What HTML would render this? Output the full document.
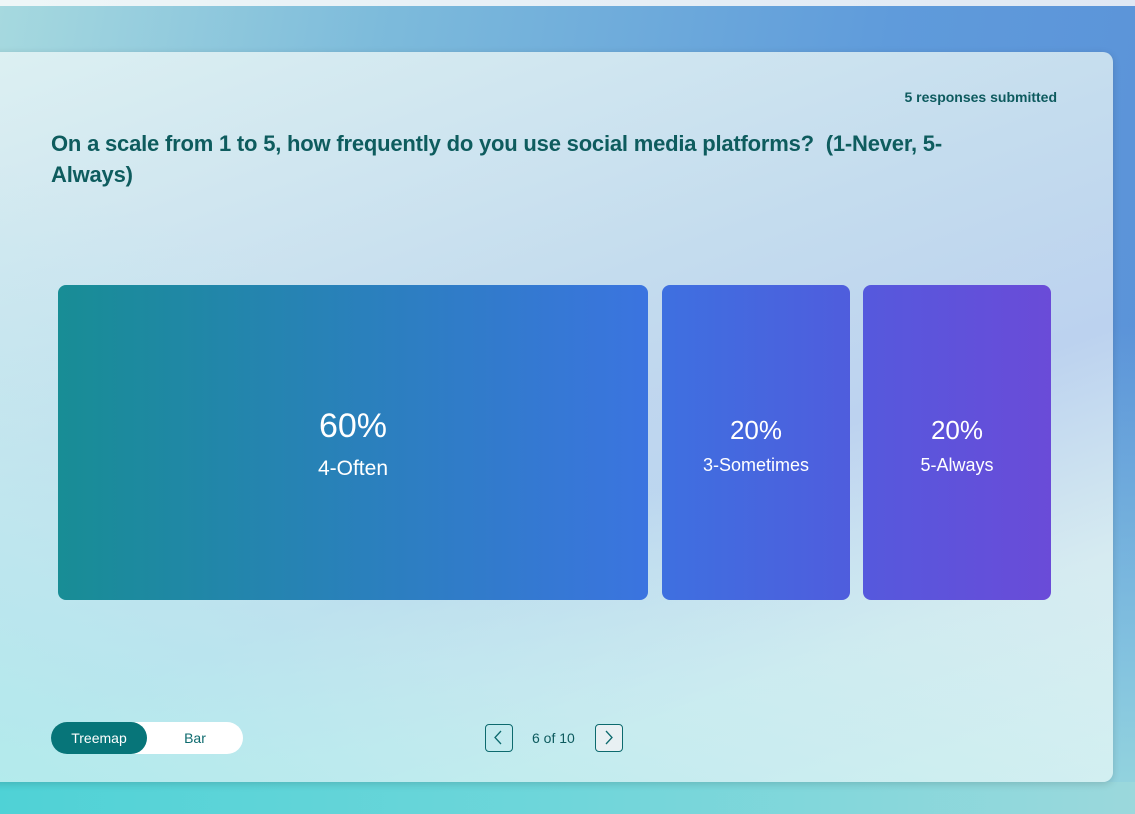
<!DOCTYPE html>
<html><head><meta charset="utf-8"><style>
*{margin:0;padding:0;box-sizing:border-box}
html,body{width:1135px;height:814px;overflow:hidden}
body{font-family:"Liberation Sans",sans-serif;position:relative;
background:linear-gradient(180deg,rgba(0,0,0,0) 0%,rgba(0,0,0,0) 40%,rgba(140,205,225,.8) 80%,rgba(150,215,222,1) 100%),linear-gradient(100deg,#a6d9df 0%,#7dbbdb 30%,#5f9bdb 70%,#5a91d8 100%);}
.topstrip{position:absolute;left:0;top:0;width:1135px;height:6px;background:linear-gradient(90deg,#eef6f7,#dfe8f4)}
.bottom{position:absolute;left:0;top:782px;width:1135px;height:32px;background:linear-gradient(90deg,#4fd2d6,#6fd6da 50%,#9bd8dc)}
.card{position:absolute;left:-12px;top:52px;width:1125px;height:730px;border-radius:10px;overflow:hidden;
background:linear-gradient(160deg,#dcf0f2 0%,#c4dcee 40%,#bcd2ef 60%,#d6ebf1 80%,#def1f3 100%);
box-shadow:0 2px 8px rgba(0,0,0,.15)}
.card:before{content:"";position:absolute;inset:0;background:linear-gradient(20deg,rgba(178,236,236,.95) 0%,rgba(190,236,238,.6) 25%,rgba(200,230,240,0) 55%)}
.resp{position:absolute;right:56px;top:37px;font-size:14px;font-weight:bold;color:#0d5a5e}
.title{position:absolute;left:63px;top:76px;width:980px;font-size:22px;font-weight:bold;color:#0e5c5e;line-height:31px;letter-spacing:-0.2px}
.box{position:absolute;top:233px;height:315px;border-radius:8px;color:#fff;text-align:center}
.b1{left:70px;width:590px;background:linear-gradient(90deg,#188d95,#3b74e0)}
.b2{left:674px;width:188px;background:linear-gradient(90deg,#3e70e0,#4f5ddd)}
.b3{left:875px;width:188px;background:linear-gradient(90deg,#5559dd,#6a4bd8)}
.pct{position:absolute;left:0;right:0}
.b1 .pct{top:122px;font-size:34px}
.b1 .lbl{position:absolute;left:0;right:0;top:172px;font-size:21px}
.b2 .pct,.b3 .pct{top:130px;font-size:26px}
.b2 .lbl,.b3 .lbl{position:absolute;left:0;right:0;top:170px;font-size:18px}
.toggle{position:absolute;left:63px;top:670px;width:192px;height:32px;border-radius:16px;background:#fff}
.toggle .on{position:absolute;left:0;top:0;width:96px;height:32px;border-radius:16px;background:#077579;color:#fff;font-size:14px;line-height:32px;text-align:center}
.toggle .off{position:absolute;left:96px;top:0;width:96px;line-height:32px;text-align:center;font-size:14px;color:#0d6a6e}
.nav{position:absolute;top:672px;width:28px;height:28px;border:1.5px solid #0d6a6e;border-radius:4px}
.pg{position:absolute;left:544px;top:678px;font-size:14px;color:#0d5a5e}
</style></head><body>
<div class="topstrip"></div>
<div class="bottom"></div>
<div class="card">
<div class="resp">5 responses submitted</div>
<div class="title">On a scale from 1 to 5, how frequently do you use social media platforms?&nbsp; (1-Never, 5-<br>Always)</div>
<div class="box b1"><div class="pct">60%</div><div class="lbl">4-Often</div></div>
<div class="box b2"><div class="pct">20%</div><div class="lbl">3-Sometimes</div></div>
<div class="box b3"><div class="pct">20%</div><div class="lbl">5-Always</div></div>
<div class="toggle"><div class="on">Treemap</div><div class="off">Bar</div></div>
<div class="nav" style="left:497px"><svg width="25" height="25" viewBox="0 0 25 25"><path d="M15 6 L9 12.5 L15 19" fill="none" stroke="#0d6a6e" stroke-width="1.3"/></svg></div>
<div class="pg">6 of 10</div>
<div class="nav" style="left:607px;background:#e8f0f3"><svg width="25" height="25" viewBox="0 0 25 25"><path d="M10 6 L16 12.5 L10 19" fill="none" stroke="#0d6a6e" stroke-width="1.3"/></svg></div>
</div>
</body></html>
